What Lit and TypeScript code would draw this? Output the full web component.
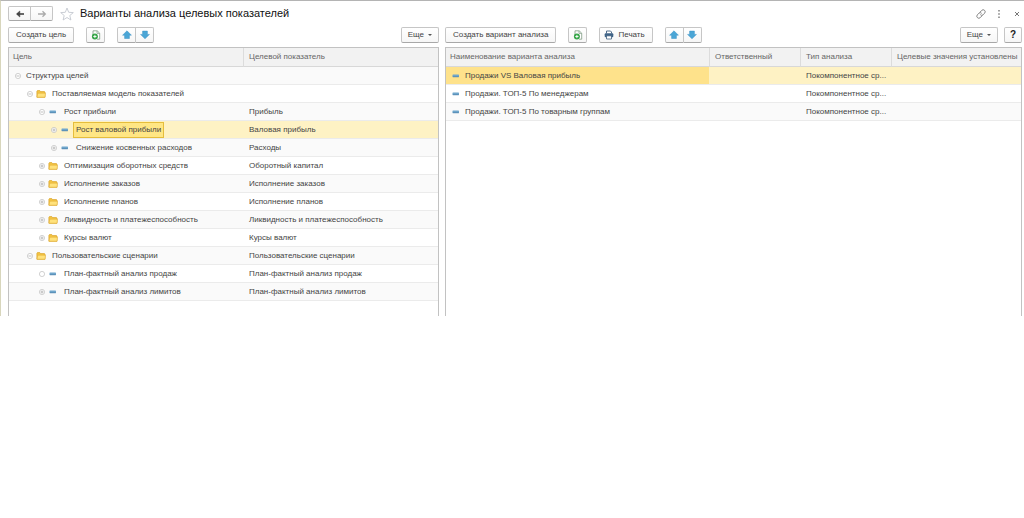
import { LitElement, html, svg, css, nothing } from "lit";
import { customElement, state } from "lit/decorators.js";
import { classMap } from "lit/directives/class-map.js";

type Mark = "open" | "closed" | "leaf";

interface Goal {
  level: number;
  mark: Mark;
  icon: "folder" | "item" | "";
  name: string;
  target: string;
}

interface Variant {
  name: string;
  owner: string;
  kind: string;
}

const GOALS: Goal[] = [
  { level: 0, mark: "open", icon: "", name: "Структура целей", target: "" },
  { level: 1, mark: "open", icon: "folder", name: "Поставляемая модель показателей", target: "" },
  { level: 2, mark: "open", icon: "item", name: "Рост прибыли", target: "Прибыль" },
  { level: 3, mark: "closed", icon: "item", name: "Рост валовой прибыли", target: "Валовая прибыль" },
  { level: 3, mark: "closed", icon: "item", name: "Снижение косвенных расходов", target: "Расходы" },
  { level: 2, mark: "closed", icon: "folder", name: "Оптимизация оборотных средств", target: "Оборотный капитал" },
  { level: 2, mark: "closed", icon: "folder", name: "Исполнение заказов", target: "Исполнение заказов" },
  { level: 2, mark: "closed", icon: "folder", name: "Исполнение планов", target: "Исполнение планов" },
  { level: 2, mark: "closed", icon: "folder", name: "Ликвидность и платежеспособность", target: "Ликвидность и платежеспособность" },
  { level: 2, mark: "closed", icon: "folder", name: "Курсы валют", target: "Курсы валют" },
  { level: 1, mark: "open", icon: "folder", name: "Пользовательские сценарии", target: "Пользовательские сценарии" },
  { level: 2, mark: "leaf", icon: "item", name: "План-фактный анализ продаж", target: "План-фактный анализ продаж" },
  { level: 2, mark: "closed", icon: "item", name: "План-фактный анализ лимитов", target: "План-фактный анализ лимитов" },
];

const VARIANTS: Variant[] = [
  { name: "Продажи VS Валовая прибыль", owner: "", kind: "Покомпонентное ср..." },
  { name: "Продажи. ТОП-5 По менеджерам", owner: "", kind: "Покомпонентное ср..." },
  { name: "Продажи. ТОП-5 По товарным группам", owner: "", kind: "Покомпонентное ср..." },
];

const icons = {
  back: html`<svg width="10" height="8" viewBox="0 0 10 8"><path d="M9 4H2" stroke="#444" stroke-width="1.600"/><path d="M4.800 1L1.500 4l3.300 3z" fill="#444" stroke="#444" stroke-width=".6"/></svg>`,
  forward: html`<svg width="10" height="8" viewBox="0 0 10 8"><path d="M1 4h7M5.500 1.300L8.300 4 5.500 6.700" fill="none" stroke="#aaa" stroke-width="1.300"/></svg>`,
  star: html`<svg width="14" height="14" viewBox="0 0 14 14"><path d="M7 1l1.700 4.300 4.600.3-3.500 2.900 1.100 4.500L7 10.500 3.100 13l1.100-4.500L.7 5.600l4.600-.3z" fill="#fff" stroke="#c4c8d0" stroke-width=".9"/></svg>`,
  link: html`<svg width="10" height="10" viewBox="0 0 10 10"><g fill="none" stroke="#777" stroke-width=".9" stroke-linecap="round"><path d="M4.200 3l1.500-1.600a1.900 1.900 0 0 1 2.900 2.800L7 5.900a1.700 1.700 0 0 1-2.400 0"/><path d="M5.800 7L4.300 8.600a1.900 1.900 0 0 1-2.900-2.800L3 4.100a1.700 1.700 0 0 1 2.400 0"/></g></svg>`,
  more: html`<svg width="4" height="8" viewBox="0 0 4 8"><path d="M1.300 0h1.400v1.500H1.300zM1.300 3.200h1.400v1.500H1.300zM1.300 6.400h1.400v1.500H1.300z" fill="#777"/></svg>`,
  close: html`<svg width="6" height="6" viewBox="0 0 6 6"><path d="M1 1l4 4M5 1L1 5" stroke="#777" stroke-width="1"/></svg>`,
  create: html`<svg width="10" height="10" viewBox="0 0 10 10"><path d="M2 5V.8h4.200L8.700 3.200v6H6" fill="#fff" stroke="#7d9a82" stroke-width=".8"/><path d="M6 1v2.400h2.500" fill="none" stroke="#7d9a82" stroke-width=".7"/><circle cx="3.900" cy="6.500" r="3" fill="#35a547"/><path d="M3.900 4.900v3.200M2.300 6.500h3.200" stroke="#fff" stroke-width=".9"/></svg>`,
  up: html`<svg width="10" height="10" viewBox="0 0 10 10"><path d="M5 .8L9.400 5.200H7.400v3.300H2.600V5.200H.6z" fill="#4ba6d6" stroke="#3b93c6" stroke-width=".5"/></svg>`,
  down: html`<svg width="10" height="10" viewBox="0 0 10 10"><path d="M5 8.800L9.400 4.400H7.400V1.100H2.600v3.300H.6z" fill="#4ba6d6" stroke="#3b93c6" stroke-width=".5"/></svg>`,
  print: html`<svg width="10" height="10" viewBox="0 0 10 10"><path d="M2.500 3.500V1h4l1 1v1.500" fill="#fff" stroke="#3f5f80" stroke-width=".9"/><rect x=".7" y="3.300" width="8.600" height="4" rx="1" fill="#3f6387"/><path d="M2.500 5.800h5V9h-5z" fill="#fff" stroke="#3f5f80" stroke-width=".8"/></svg>`,
  folder: html`<svg width="10" height="8" viewBox="0 0 10 8"><path d="M.9 7.300V1.200L1.400.6h2.400l.8 1h3.900l.5.500v5.200z" fill="#f5c644" stroke="#d9a22a" stroke-width=".7"/><path d="M1 7.200l.8-4h7.700L9 7.200z" fill="#ffe27c" stroke="#dfab35" stroke-width=".5"/></svg>`,
  item: html`<svg width="8" height="4" viewBox="0 0 8 4"><rect x=".5" y=".5" width="6.500" height="2.600" rx=".6" fill="#6fa6cc"/><path d="M.8 2.800h6" stroke="#4a7fa8" stroke-width=".7"/></svg>`,
};

const markIcon = (mark: Mark) => html`<svg width="6" height="6" viewBox="0 0 6 6">
  <circle cx="3" cy="3" r="2.600" fill="#fff" stroke="#b4b4b4" stroke-width=".6"/>
  ${mark === "leaf" ? nothing : svg`<path d="M1.400 3h3.200" stroke="#999" stroke-width=".6"/>`}
  ${mark === "closed" ? svg`<path d="M3 1.400v3.200" stroke="#999" stroke-width=".6"/>` : nothing}
</svg>`;

@customElement("app-root")
export class AppRoot extends LitElement {
  @state() private goal = 3;
  @state() private variant = 0;

  static styles = css`
    :host {
      display: block;
      font: 8px/12px "Liberation Sans", Arial, sans-serif;
      color: #444;
      background: #fff;
    }
    * { box-sizing: border-box; }
    svg { display: block; flex: none; }
    .window {
      border-top: 1px solid #b4b4b4;
      border-left: 1px solid #d8d6bc;
      padding: 5px 2px 0 7px;
    }
    header { display: flex; align-items: center; height: 15px; }
    h1 { margin: 0 auto 0 6px; font-size: 11px; line-height: 15px; font-weight: 400; color: #111; }
    button { font: inherit; color: inherit; margin: 0; padding: 0; cursor: pointer; }
    .plain {
      display: inline-flex; align-items: center; justify-content: center;
      border: 0; background: none; flex: none;
    }
    .star { margin-left: 7px; }
    .system { display: flex; align-items: center; gap: 8px; }
    .system .plain { width: 10px; }
    .btn {
      display: inline-flex; align-items: center; justify-content: center; gap: 4px;
      height: 16px; padding: 0 7px; white-space: nowrap;
      border: 1px solid #c6c6c6; border-bottom-color: #a8a8a8; border-radius: 2px;
      background: linear-gradient(#fff, #f6f6f6);
    }
    .icon { width: 19px; padding: 0; }
    .print { padding-left: 4px; }
    .group { display: inline-flex; }
    .group .btn { width: 19px; padding: 0; }
    .group .btn:first-child { border-radius: 2px 0 0 2px; }
    .group .btn:last-child { border-radius: 0 2px 2px 0; border-left: 0; width: 18px; }
    .nav .btn { width: 23px; height: 15px; }
    .nav .btn:last-child { width: 22px; }
    .caret { border: 2px solid transparent; border-top-color: #555; border-bottom: 0; }
    .help { font-weight: 700; width: 18px; padding: 0; color: #222; font-size: 10px; }
    .panes { display: grid; grid-template-columns: 431fr 577fr; gap: 6px; margin-top: 5px; }
    .pane { min-width: 0; }
    .bar { display: flex; align-items: center; gap: 12px; height: 17px; margin-bottom: 4px; }
    .push { margin-left: auto; padding: 0 6px; }
    .push + .help { margin-left: -6px; }
    .box { border: 1px solid #c2c2c2; border-bottom: 0; min-height: 269px; }
    table { width: 100%; border-collapse: separate; border-spacing: 0; table-layout: fixed; }
    th, td {
      padding: 0 0 0 6px; text-align: left; font-weight: 400; white-space: nowrap;
      border-bottom: 1px solid #ebebeb;
    }
    th { height: 19px; padding-left: 5px; background: #f2f2f2; color: #666; border-bottom-color: #d8d8d8; }
    th + th { border-left: 1px solid #dcdcdc; }
    td { height: 18px; }
    td:first-child, th:first-child { padding-left: 4px; }
    .c-target { width: 195px; }
    .c-owner { width: 91px; }
    .c-kind { width: 91px; }
    .c-set { width: 130px; }
    tbody tr:nth-child(odd) { background: #fafafa; }
    tbody tr.selected { background: #fef2c4; }
    .variants tr.selected td:first-child { background: #fee28b; }
    .node { display: flex; align-items: center; height: 17px; }
    .level-1 { padding-left: 12px; }
    .level-2 { padding-left: 24px; }
    .level-3 { padding-left: 36px; }
    .mark { width: 9px; height: 12px; }
    .pic { display: flex; justify-content: center; width: 12px; margin: 0 1px; }
    .label { padding: 0 2px; margin-left: 1px; border: 1px solid transparent; line-height: 14px; }
    .goals .selected .label { background: #ffe684; border-color: #e5bd3c; }
    .variants .pic { margin: 0; }
    .variants .label { margin: 0; }
  `;

  private moveButtons() {
    return html`<span class="group">
      <button class="btn" aria-label="Переместить вверх">${icons.up}</button>
      <button class="btn" aria-label="Переместить вниз">${icons.down}</button>
    </span>`;
  }

  private moreButton() {
    return html`<button class="btn push" aria-haspopup="menu">Еще <span class="caret"></span></button>`;
  }

  private goalRow(g: Goal, i: number) {
    return html`<tr class=${classMap({ selected: i === this.goal })} @click=${() => (this.goal = i)}>
      <td><div class="node level-${g.level}">
        <button class="plain mark" aria-label=${g.name}>${markIcon(g.mark)}</button>
        ${g.icon ? html`<span class="pic">${icons[g.icon]}</span>` : nothing}
        <span class="label">${g.name}</span>
      </div></td>
      <td>${g.target}</td>
    </tr>`;
  }

  private variantRow(v: Variant, i: number) {
    return html`<tr class=${classMap({ selected: i === this.variant })} @click=${() => (this.variant = i)}>
      <td><div class="node"><span class="pic">${icons.item}</span><span class="label">${v.name}</span></div></td>
      <td>${v.owner}</td>
      <td>${v.kind}</td>
      <td></td>
    </tr>`;
  }

  render() {
    return html`<main class="window">
      <header>
        <span class="group nav">
          <button class="btn" aria-label="Назад">${icons.back}</button>
          <button class="btn" aria-label="Вперед">${icons.forward}</button>
        </span>
        <button class="plain star" aria-label="В избранное">${icons.star}</button>
        <h1>Варианты анализа целевых показателей</h1>
        <div class="system">
          <button class="plain" aria-label="Ссылка">${icons.link}</button>
          <button class="plain" aria-label="Меню">${icons.more}</button>
          <button class="plain" aria-label="Закрыть">${icons.close}</button>
        </div>
      </header>
      <div class="panes">
        <section class="pane">
          <div class="bar">
            <button class="btn">Создать цель</button>
            <button class="btn icon" aria-label="Добавить цель">${icons.create}</button>
            ${this.moveButtons()}
            ${this.moreButton()}
          </div>
          <div class="box">
            <table class="goals">
              <colgroup><col><col class="c-target"></colgroup>
              <thead><tr><th>Цель</th><th>Целевой показатель</th></tr></thead>
              <tbody>${GOALS.map((g, i) => this.goalRow(g, i))}</tbody>
            </table>
          </div>
        </section>
        <section class="pane">
          <div class="bar">
            <button class="btn">Создать вариант анализа</button>
            <button class="btn icon" aria-label="Добавить вариант">${icons.create}</button>
            <button class="btn print">${icons.print}Печать</button>
            ${this.moveButtons()}
            ${this.moreButton()}
            <button class="btn help" aria-label="Справка">?</button>
          </div>
          <div class="box">
            <table class="variants">
              <colgroup><col><col class="c-owner"><col class="c-kind"><col class="c-set"></colgroup>
              <thead><tr><th>Наименование варианта анализа</th><th>Ответственный</th><th>Тип анализа</th><th>Целевые значения установлены</th></tr></thead>
              <tbody>${VARIANTS.map((v, i) => this.variantRow(v, i))}</tbody>
            </table>
          </div>
        </section>
      </div>
    </main>`;
  }
}
